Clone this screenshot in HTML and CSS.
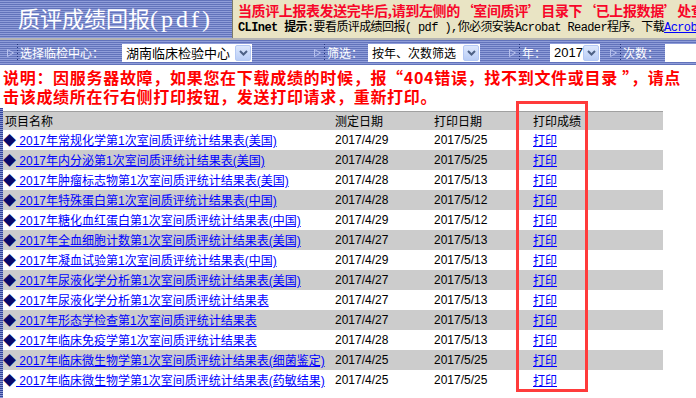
FILE: index.html
```html
<!DOCTYPE html>
<html>

<head>
  <meta charset = "utf-8">
  <title>质评成绩回报</title>

  <link rel = "stylesheet" href = "styles.css">
</head>

<body>

  <header class = "top">
    <div class = "title">质评成绩回报<span class = "title-pdf">(pdf)</span></div>
    <div class = "notice">
      <div class = "notice-warn">当质评上报表发送完毕后,请到左侧的‘室间质评’目录下‘已上报数据’处查看上报状态</div>
      <div class = "notice-tip"><b>CLInet 提示</b>:要看质评成绩回报( pdf ),你必须安装Acrobat Reader程序。下载<a href = "#">Acrobat Reader</a></div>
    </div>
  </header>

  <div class = "filter-bar">
    <span class = "label label-center"><svg class = "label-icon" width = "14" height = "18" viewBox = "0 0 14 18"><path d = "M1.5 5.5 L1.5 12.5 L7.5 9 Z" fill = "none" stroke = "#b8c2ee"/><path d = "M11.5 0 V18" stroke = "#23357e" stroke-dasharray = "1 2"/></svg>选择临检中心：</span>
    <span class = "select select-center">湖南临床检验中心<span class = "select-button"><svg width = "9" height = "6" viewBox = "0 0 9 6"><path d = "M1 1 L4.5 4.5 L8 1" fill = "none" stroke = "#4d6185" stroke-width = "2"/></svg></span></span>

    <span class = "label label-filter"><svg class = "label-icon" width = "14" height = "18" viewBox = "0 0 14 18"><path d = "M1.5 5.5 L1.5 12.5 L7.5 9 Z" fill = "none" stroke = "#b8c2ee"/><path d = "M11.5 0 V18" stroke = "#23357e" stroke-dasharray = "1 2"/></svg>筛选：</span>
    <span class = "select select-filter">按年、次数筛选<span class = "select-button"><svg width = "9" height = "6" viewBox = "0 0 9 6"><path d = "M1 1 L4.5 4.5 L8 1" fill = "none" stroke = "#4d6185" stroke-width = "2"/></svg></span></span>

    <span class = "label label-year"><svg class = "label-icon" width = "14" height = "18" viewBox = "0 0 14 18"><path d = "M1.5 5.5 L1.5 12.5 L7.5 9 Z" fill = "none" stroke = "#b8c2ee"/><path d = "M11.5 0 V18" stroke = "#23357e" stroke-dasharray = "1 2"/></svg>年：</span>
    <span class = "select select-year">2017<span class = "select-button"><svg width = "9" height = "6" viewBox = "0 0 9 6"><path d = "M1 1 L4.5 4.5 L8 1" fill = "none" stroke = "#4d6185" stroke-width = "2"/></svg></span></span>

    <span class = "label label-times"><svg class = "label-icon" width = "14" height = "18" viewBox = "0 0 14 18"><path d = "M1.5 5.5 L1.5 12.5 L7.5 9 Z" fill = "none" stroke = "#b8c2ee"/><path d = "M11.5 0 V18" stroke = "#23357e" stroke-dasharray = "1 2"/></svg>次数：</span>
    <span class = "select select-times"><span class = "select-button"><svg width = "9" height = "6" viewBox = "0 0 9 6"><path d = "M1 1 L4.5 4.5 L8 1" fill = "none" stroke = "#4d6185" stroke-width = "2"/></svg></span></span>
  </div>

  <p class = "note">说明：因服务器故障，如果您在下载成绩的时候，报“404错误，找不到文件或目录 ”，请点<br>击该成绩所在行右侧打印按钮，发送打印请求，重新打印。</p>

  <div class = "list">
    <table class = "results">
      <tr class = "results-head">
        <td class = "col-name">项目名称</td>
        <td class = "col-test">测定日期</td>
        <td class = "col-date">打印日期</td>
        <td class = "col-print">打印成绩</td>
      </tr>
      <tr>
        <td class = "col-name"><span class = "bullet">◆</span><a href = "#">&nbsp;2017年常规化学第1次室间质评统计结果表(美国)</a></td>
        <td class = "col-test">2017/4/29</td>
        <td class = "col-date">2017/5/25</td>
        <td class = "col-print"><a href = "#">打印</a></td>
      </tr>
      <tr>
        <td class = "col-name"><span class = "bullet">◆</span><a href = "#">&nbsp;2017年内分泌第1次室间质评统计结果表(美国)</a></td>
        <td class = "col-test">2017/4/28</td>
        <td class = "col-date">2017/5/25</td>
        <td class = "col-print"><a href = "#">打印</a></td>
      </tr>
      <tr>
        <td class = "col-name"><span class = "bullet">◆</span><a href = "#">&nbsp;2017年肿瘤标志物第1次室间质评统计结果表(美国)</a></td>
        <td class = "col-test">2017/4/28</td>
        <td class = "col-date">2017/5/13</td>
        <td class = "col-print"><a href = "#">打印</a></td>
      </tr>
      <tr>
        <td class = "col-name"><span class = "bullet">◆</span><a href = "#">&nbsp;2017年特殊蛋白第1次室间质评统计结果表(中国)</a></td>
        <td class = "col-test">2017/4/28</td>
        <td class = "col-date">2017/5/12</td>
        <td class = "col-print"><a href = "#">打印</a></td>
      </tr>
      <tr>
        <td class = "col-name"><span class = "bullet">◆</span><a href = "#">&nbsp;2017年糖化血红蛋白第1次室间质评统计结果表(中国)</a></td>
        <td class = "col-test">2017/4/29</td>
        <td class = "col-date">2017/5/12</td>
        <td class = "col-print"><a href = "#">打印</a></td>
      </tr>
      <tr>
        <td class = "col-name"><span class = "bullet">◆</span><a href = "#">&nbsp;2017年全血细胞计数第1次室间质评统计结果表(美国)</a></td>
        <td class = "col-test">2017/4/27</td>
        <td class = "col-date">2017/5/13</td>
        <td class = "col-print"><a href = "#">打印</a></td>
      </tr>
      <tr>
        <td class = "col-name"><span class = "bullet">◆</span><a href = "#">&nbsp;2017年凝血试验第1次室间质评统计结果表(中国)</a></td>
        <td class = "col-test">2017/4/29</td>
        <td class = "col-date">2017/5/13</td>
        <td class = "col-print"><a href = "#">打印</a></td>
      </tr>
      <tr>
        <td class = "col-name"><span class = "bullet">◆</span><a href = "#">&nbsp;2017年尿液化学分析第1次室间质评统计结果表(美国)</a></td>
        <td class = "col-test">2017/4/27</td>
        <td class = "col-date">2017/5/13</td>
        <td class = "col-print"><a href = "#">打印</a></td>
      </tr>
      <tr>
        <td class = "col-name"><span class = "bullet">◆</span><a href = "#">&nbsp;2017年尿液化学分析第1次室间质评统计结果表</a></td>
        <td class = "col-test">2017/4/27</td>
        <td class = "col-date">2017/5/13</td>
        <td class = "col-print"><a href = "#">打印</a></td>
      </tr>
      <tr>
        <td class = "col-name"><span class = "bullet">◆</span><a href = "#">&nbsp;2017年形态学检查第1次室间质评统计结果表</a></td>
        <td class = "col-test">2017/4/27</td>
        <td class = "col-date">2017/5/13</td>
        <td class = "col-print"><a href = "#">打印</a></td>
      </tr>
      <tr>
        <td class = "col-name"><span class = "bullet">◆</span><a href = "#">&nbsp;2017年临床免疫学第1次室间质评统计结果表</a></td>
        <td class = "col-test">2017/4/28</td>
        <td class = "col-date">2017/5/13</td>
        <td class = "col-print"><a href = "#">打印</a></td>
      </tr>
      <tr>
        <td class = "col-name"><span class = "bullet">◆</span><a href = "#">&nbsp;2017年临床微生物学第1次室间质评统计结果表(细菌鉴定)</a></td>
        <td class = "col-test">2017/4/25</td>
        <td class = "col-date">2017/5/25</td>
        <td class = "col-print"><a href = "#">打印</a></td>
      </tr>
      <tr>
        <td class = "col-name"><span class = "bullet">◆</span><a href = "#">&nbsp;2017年临床微生物学第1次室间质评统计结果表(药敏结果)</a></td>
        <td class = "col-test">2017/4/25</td>
        <td class = "col-date">2017/5/25</td>
        <td class = "col-print"><a href = "#">打印</a></td>
      </tr>
    </table>
  </div>

  <div class = "print-mark"></div>

</body>

</html>
```

FILE: styles.css
```css
body {
  margin: 0;
  padding: 0;
  width: 696px;
  height: 398px;
  overflow: hidden;
  background-color: white;
  font-family: "Liberation Sans", "Noto Sans CJK SC", sans-serif;
}

/* header: title on stripes, notice on khaki */
.top {
  display: flex;
  height: 38px;
  border-bottom: 2px solid #b4b4b4;
}

.title {
  width: 214px;
  padding-left: 18px;
  background: repeating-linear-gradient(to bottom, #6273bb 0, #6273bb 1px, #8f9dd9 1px, #8f9dd9 2px);
  color: white;
  font-family: "Liberation Serif", "Noto Sans CJK SC", serif;
  font-size: 22px;
  line-height: 38px;
  white-space: nowrap;
}

.title-pdf {
  font-size: 24px;
  letter-spacing: 3px;
}

.notice {
  flex: 1;
  overflow: hidden;
  padding-left: 5px;
  background-color: #e9e4c4;
  border-left: 1px solid #7b7b6b;
  white-space: nowrap;
}

.notice-warn {
  color: #f8062a;
  font-family: "Noto Sans CJK SC", sans-serif;
  font-weight: bold;
  font-size: 14px;
  line-height: 20px;
  letter-spacing: -0.4px;
}

.notice-tip {
  color: black;
  font-family: "Liberation Mono", "Noto Sans CJK SC", monospace;
  font-size: 12px;
  line-height: 16px;
  letter-spacing: -0.6px;
}

.notice-tip a {
  color: #0000ff;
}

/* filter bar */
.filter-bar {
  display: flex;
  align-items: center;
  height: 25px;
  overflow: hidden;
  background: repeating-linear-gradient(to bottom, #6273bb 0, #6273bb 1px, #8f9dd9 1px, #8f9dd9 2px);
  font-family: "Noto Sans CJK SC", sans-serif;
}

.label {
  display: flex;
  align-items: center;
  justify-content: flex-end;
  flex-shrink: 0;
  box-sizing: border-box;
  color: white;
  font-size: 12px;
  white-space: nowrap;
}

.label-icon {
  flex-shrink: 0;
}

.label-center {
  width: 122px;
  justify-content: flex-start;
  padding-left: 6px;
}

.label-filter {
  width: 116px;
  padding-right: 5px;
}

.label-year {
  width: 70px;
  padding-right: 4px;
}

.label-times {
  width: 65px;
  padding-right: 6px;
}

.select {
  display: flex;
  align-items: center;
  justify-content: space-between;
  flex-shrink: 0;
  box-sizing: border-box;
  height: 18px;
  padding-left: 4px;
  background-color: white;
  color: black;
  font-size: 12px;
  white-space: nowrap;
}

.select-center {
  width: 130px;
  font-size: 13px;
}

.select-filter {
  width: 112px;
}

.select-year {
  width: 50px;
  font-family: "Liberation Sans", sans-serif;
  font-size: 13px;
}

.select-times {
  width: 50px;
  justify-content: flex-end;
}

.select-button {
  display: flex;
  align-items: center;
  justify-content: center;
  width: 16px;
  height: 16px;
  margin-right: 1px;
  border: 1px solid #b4c8f4;
  border-radius: 2px;
  box-sizing: border-box;
  background: linear-gradient(to bottom, #dde8fd, #b9cdf6);
}

/* red note */
.note {
  margin: 0;
  padding: 3px 0 0 3px;
  height: 40px;
  color: #ff0000;
  font-family: "Noto Sans CJK SC", sans-serif;
  font-weight: bold;
  font-size: 16px;
  line-height: 19px;
  letter-spacing: 0.7px;
  white-space: nowrap;
}

/* result list */
.list {
  height: 290px;
  padding-left: 3px;
  padding-top: 3px;
  background: repeating-linear-gradient(to bottom, #34449a 0, #34449a 1px, #8a97d4 1px, #8a97d4 2px) no-repeat left top / 3px 100%;
}

.results {
  width: 660px;
  border-collapse: collapse;
  background-color: white;
  font-size: 12px;
  table-layout: fixed;
}

.results td {
  padding: 0;
  white-space: nowrap;
  overflow: hidden;
}

.results tr {
  height: 20px;
}

.results tr:nth-child(odd) {
  background-color: #cccccc;
}

.results .results-head {
  height: 18px;
  background-color: #ece9d8;
  border-top: 1px solid #a0a0a0;
}

.results-head .col-name {
  padding-left: 2px;
}

.col-name {
  width: 328px;
}

.col-test {
  width: 97px;
  padding-left: 2px !important;
}

.col-date {
  width: 95px;
  padding-left: 2px !important;
}

.col-print {
  padding-left: 4px !important;
}

.results a {
  color: #0000ff;
}

.bullet {
  color: #0a0a6a;
  font-size: 13px;
}

/* annotation drawn over the print column */
.print-mark {
  position: absolute;
  left: 516px;
  top: 101px;
  width: 72px;
  height: 291px;
  box-sizing: border-box;
  border: 3px solid #ff3b3b;
}
```
